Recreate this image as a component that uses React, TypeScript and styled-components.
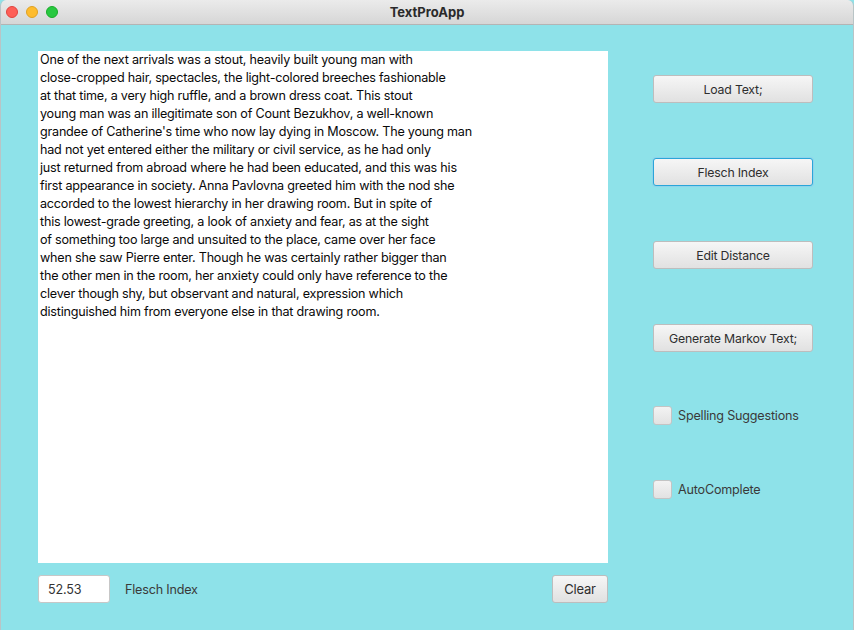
import React from "react";
import styled, { createGlobalStyle } from "styled-components";

const Global = createGlobalStyle`
  html, body { margin: 0; padding: 0; background: #8ee2e9; }
  body { font-family: Inter, "Noto Sans", sans-serif; }
  * { box-sizing: border-box; }
`;

const Window = styled.div`
  width: 854px;
  height: 630px;
  display: flex;
  flex-direction: column;
  background: #8ee2e9;
  border-left: 1px solid #b9c4c6;
  border-right: 1px solid #b9c4c6;
  border-radius: 6px 6px 0 0;
  overflow: hidden;
`;

const TitleBar = styled.div`
  height: 25px;
  flex: none;
  position: relative;
  display: flex;
  align-items: center;
  justify-content: center;
  background: linear-gradient(#ebebeb, #d6d6d6);
  border-bottom: 1px solid #b4b4b4;
  font-family: Inter, sans-serif;
  font-weight: 700;
  font-size: 13px;
  color: #2a2a2a;
`;

const Lights = styled.div`
  position: absolute;
  left: 5px;
  top: 6px;
  display: flex;
  gap: 8px;
`;

const Light = styled.span<{ $c: string; $b: string }>`
  width: 12px;
  height: 12px;
  border-radius: 50%;
  background: ${(p) => p.$c};
  border: 1px solid ${(p) => p.$b};
`;

const Body = styled.div`
  flex: 1;
  display: grid;
  grid-template-columns: 570px 160px;
  column-gap: 45px;
  padding: 26px 0 0 37px;
`;

const Left = styled.div`
  display: flex;
  flex-direction: column;
`;

const TextArea = styled.div`
  width: 570px;
  height: 512px;
  background: #ffffff;
  padding: 0 0 0 2px;
  font-family: Inter, sans-serif;
  font-size: 12.6px;
  letter-spacing: -0.22px;
  line-height: 18px;
  color: #0a0a0a;
  white-space: pre;
  overflow: hidden;
`;

const Line = styled.div``;

const BottomRow = styled.div`
  margin-top: 12px;
  display: flex;
  align-items: center;
`;

const NumberBox = styled.div`
  width: 72px;
  height: 28px;
  background: #fff;
  border: 1px solid #c7c7c7;
  border-radius: 3px;
  font-size: 12.6px;
  letter-spacing: -0.2px;
  color: #333;
  padding-left: 9px;
  display: flex;
  align-items: center;
`;

const Label = styled.span`
  margin-left: 15px;
  font-size: 12.6px;
  letter-spacing: -0.2px;
  color: #3a3a3a;
`;

const Spacer = styled.div`
  flex: 1;
`;

const Button = styled.button<{ $focus?: boolean }>`
  height: 28px;
  border-radius: 3px;
  border: 1px solid ${(p) => (p.$focus ? "#2aa6d8" : "#bdbdbd")};
  box-shadow: ${(p) => (p.$focus ? "0 0 0 1px #8fd3ec" : "none")};
  background: linear-gradient(#f6f6f6, #e1e1e1);
  font-family: Inter, sans-serif;
  font-size: 12.3px;
  letter-spacing: -0.2px;
  color: #2e2e2e;
  padding: 0;
`;

const ClearButton = styled(Button)`
  width: 56px;
  font-size: 13px;
`;

const Right = styled.div`
  display: flex;
  flex-direction: column;
  padding-top: 24px;
`;

const SideButton = styled(Button)<{ $mt: number }>`
  width: 160px;
  margin-top: ${(p) => p.$mt}px;
`;

const CheckRow = styled.label<{ $mt: number }>`
  display: flex;
  align-items: center;
  gap: 6px;
  margin-top: ${(p) => p.$mt}px;
  font-size: 12.6px;
  letter-spacing: -0.2px;
  color: #3a3a3a;
`;

const Box = styled.span`
  width: 19px;
  height: 19px;
  border-radius: 3px;
  border: 1px solid #c4c4c4;
  background: linear-gradient(#f3f3f3, #e2e2e2);
`;

const lines = [
  "One of the next arrivals was a stout, heavily built young man with",
  "close-cropped hair, spectacles, the light-colored breeches fashionable",
  "at that time, a very high ruffle, and a brown dress coat. This stout",
  "young man was an illegitimate son of Count Bezukhov, a well-known",
  "grandee of Catherine's time who now lay dying in Moscow. The young man",
  "had not yet entered either the military or civil service, as he had only",
  "just returned from abroad where he had been educated, and this was his",
  "first appearance in society. Anna Pavlovna greeted him with the nod she",
  "accorded to the lowest hierarchy in her drawing room. But in spite of",
  "this lowest-grade greeting, a look of anxiety and fear, as at the sight",
  "of something too large and unsuited to the place, came over her face",
  "when she saw Pierre enter. Though he was certainly rather bigger than",
  "the other men in the room, her anxiety could only have reference to the",
  "clever though shy, but observant and natural, expression which",
  "distinguished him from everyone else in that drawing room.",
];

export default function App() {
  return (
    <>
      <Global />
      <Window>
        <TitleBar>
          <Lights>
            <Light $c="#fe5f57" $b="#e0443e" />
            <Light $c="#febc2e" $b="#dea123" />
            <Light $c="#28c840" $b="#1aab29" />
          </Lights>
          TextProApp
        </TitleBar>
        <Body>
          <Left>
            <TextArea>
              {lines.map((l, i) => (
                <Line key={i}>{l}</Line>
              ))}
            </TextArea>
            <BottomRow>
              <NumberBox>52.53</NumberBox>
              <Label>Flesch Index</Label>
              <Spacer />
              <ClearButton>Clear</ClearButton>
            </BottomRow>
          </Left>
          <Right>
            <SideButton $mt={0}>Load Text;</SideButton>
            <SideButton $mt={55} $focus>Flesch Index</SideButton>
            <SideButton $mt={55}>Edit Distance</SideButton>
            <SideButton $mt={55}>Generate Markov Text;</SideButton>
            <CheckRow $mt={54}>
              <Box />
              Spelling Suggestions
            </CheckRow>
            <CheckRow $mt={55}>
              <Box />
              AutoComplete
            </CheckRow>
          </Right>
        </Body>
      </Window>
    </>
  );
}
